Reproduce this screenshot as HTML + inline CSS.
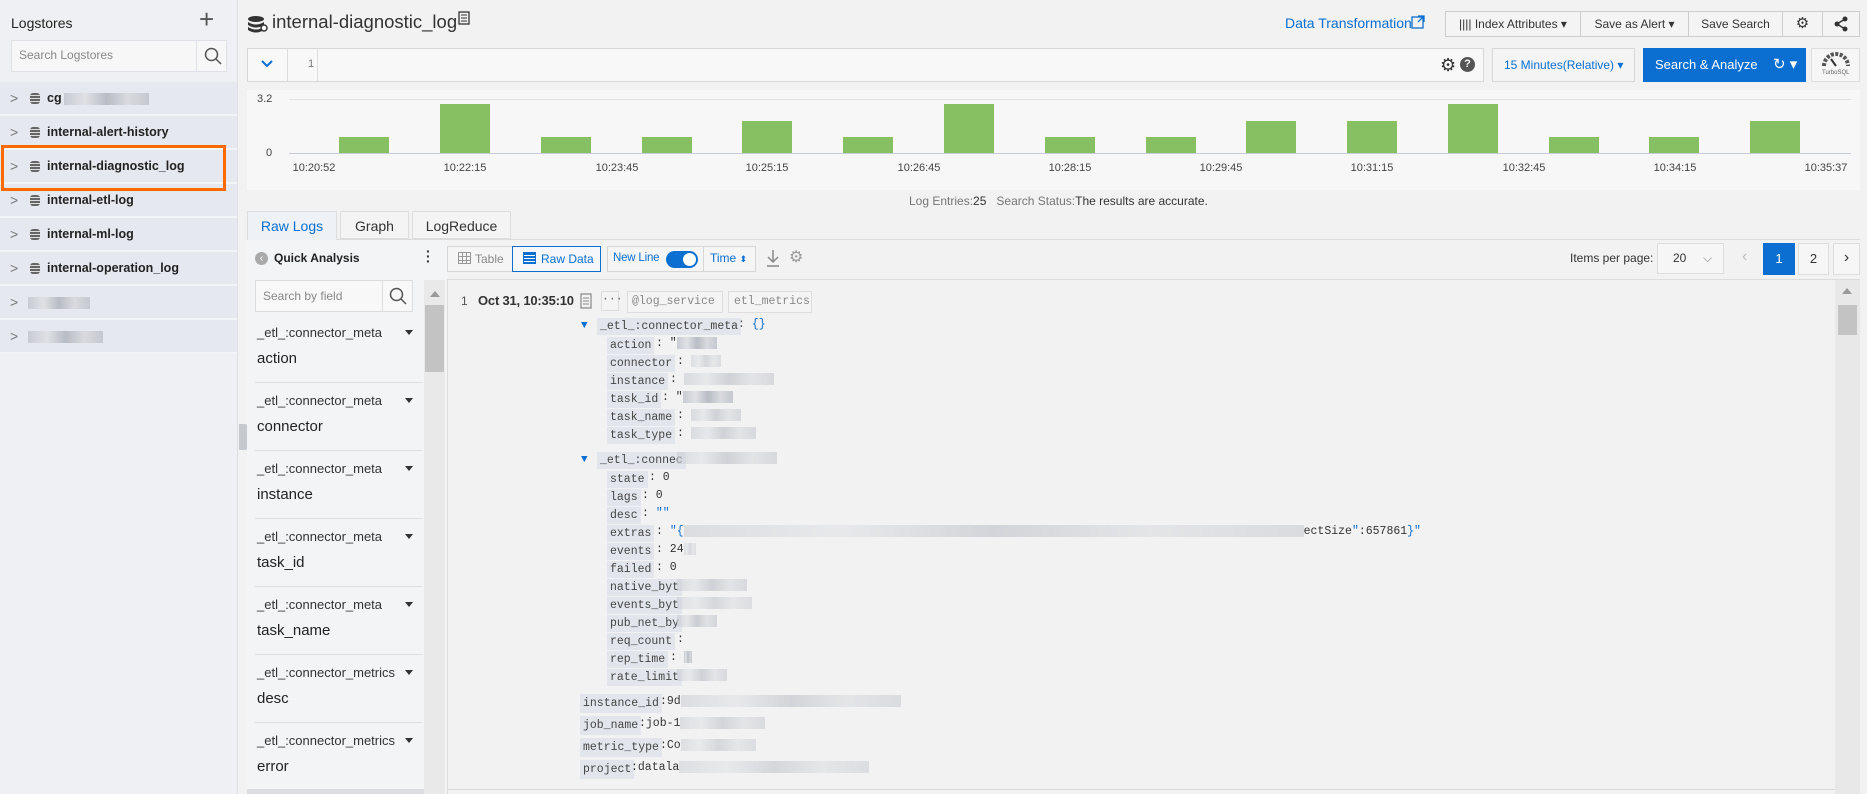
<!DOCTYPE html>
<html><head><meta charset="utf-8"><style>
*{box-sizing:border-box;margin:0;padding:0}
body{width:1867px;height:794px;overflow:hidden;background:#f2f2f2;font-family:"Liberation Sans",sans-serif;color:#333;position:relative}
.a{position:absolute}
.side{left:0;top:0;width:238px;height:794px;background:#eef0f3;border-right:1px solid #dcdfe4}
.row{position:absolute;left:0;width:237px;height:34px;background:#e5e8ee;border-bottom:2px solid #f3f4f7;font-size:12.5px;font-weight:bold;color:#222;line-height:32px}
.row .chev{position:absolute;left:10px;top:0;color:#777;font-weight:normal;font-size:14px}
.row .db{position:absolute;left:30px;top:11px;width:10px;height:11px;border-radius:3px;background:repeating-linear-gradient(#666 0 2px,#ddd 2px 3px)}
.row .t{position:absolute;left:47px}
.blur{display:inline-block;height:12px;background:linear-gradient(90deg,#c8cbd2,#dfe1e5,#b8bcc4,#d8dade,#c5c8cf);vertical-align:middle}
.btn{position:absolute;top:11px;height:26px;border:1px solid #ccc;background:#f4f4f4;font-size:12px;line-height:24px;text-align:center;color:#333}
.mono{font-family:"Liberation Mono","DejaVu Sans Mono",monospace;font-size:11.5px}
.k{position:absolute;background:#e2e6ec;padding:0 3px;height:17px;line-height:17px;color:#444}
.fl{position:absolute;left:257px;font-size:13px;color:#333}
.fv{position:absolute;left:257px;font-size:15px;color:#222}
.tri{position:absolute;left:405px;width:0;height:0;border-left:4px solid transparent;border-right:4px solid transparent;border-top:5px solid #333}
.lbl{position:absolute;top:162px;font-size:11px;color:#444;transform:translateX(-50%)}
.bar{position:absolute;width:50px;background:#86c063}
</style></head><body>

<div class="a side">
  <div class="a" style="left:11px;top:15px;font-size:14px;color:#222">Logstores</div>
  <div class="a" style="left:199px;top:4px;font-size:26px;color:#555;font-weight:300">+</div>
  <div class="a" style="left:11px;top:40px;width:216px;height:32px;background:#f7f7f8;border:1px solid #dde0e4"></div>
  <div class="a" style="left:19px;top:48px;font-size:12px;color:#888">Search Logstores</div>
  <div class="a" style="left:196px;top:41px;width:1px;height:30px;background:#dde0e4"></div>
  <svg class="a" style="left:204px;top:47px" width="18" height="18"><circle cx="7.5" cy="7.5" r="6" fill="none" stroke="#555" stroke-width="1.5"/><line x1="12" y1="12" x2="17" y2="17" stroke="#555" stroke-width="1.5"/></svg>
  <div class="row" style="top:82px"><span class="chev">&gt;</span><span class="db"></span><span class="t">cg<span class="blur" style="width:85px;margin-left:2px"></span></span></div>
  <div class="row" style="top:116px"><span class="chev">&gt;</span><span class="db"></span><span class="t">internal-alert-history</span></div>
  <div class="row" style="top:150px"><span class="chev">&gt;</span><span class="db"></span><span class="t">internal-diagnostic_log</span></div>
  <div class="row" style="top:184px"><span class="chev">&gt;</span><span class="db"></span><span class="t">internal-etl-log</span></div>
  <div class="row" style="top:218px"><span class="chev">&gt;</span><span class="db"></span><span class="t">internal-ml-log</span></div>
  <div class="row" style="top:252px"><span class="chev">&gt;</span><span class="db"></span><span class="t">internal-operation_log</span></div>
  <div class="row" style="top:286px"><span class="chev">&gt;</span><span class="t" style="left:28px"><span class="blur" style="width:62px"></span></span></div>
  <div class="row" style="top:320px"><span class="chev">&gt;</span><span class="t" style="left:28px"><span class="blur" style="width:75px"></span></span></div>
  <div class="a" style="left:1px;top:145px;width:225px;height:46px;border:3px solid #ff6a00"></div>
</div>
<div class="a" style="left:239px;top:424px;width:9px;height:26px;background:#c6c9ce;border-radius:0 3px 3px 0"></div>

<svg class="a" style="left:247px;top:15px" width="22" height="18"><ellipse cx="9" cy="4" rx="8" ry="3" fill="#333"/><path d="M1 7q8 5 16 0v3q-8 5-16 0z" fill="#333"/><path d="M1 12q8 5 16 0v3q-8 5-16 0z" fill="#333"/><circle cx="17" cy="13" r="3" fill="#fff" stroke="#333" stroke-width="1.5"/></svg>
<div class="a" style="left:272px;top:11px;font-size:18.5px;color:#333">internal-diagnostic_log</div>
<svg class="a" style="left:458px;top:11px" width="12" height="14"><rect x="1" y="1" width="10" height="12" fill="none" stroke="#333" stroke-width="1.3"/><line x1="3" y1="4" x2="9" y2="4" stroke="#333"/><line x1="3" y1="7" x2="9" y2="7" stroke="#333"/><line x1="3" y1="10" x2="9" y2="10" stroke="#333"/></svg>

<div class="a" style="left:1285px;top:15px;font-size:14px;color:#0a6fd1">Data Transformation</div>
<svg class="a" style="left:1411px;top:15px" width="14" height="14"><rect x="1" y="2" width="11" height="11" fill="none" stroke="#0a6fd1" stroke-width="1.3"/><path d="M7 1h6v6M13 1L7 7" stroke="#0a6fd1" fill="none" stroke-width="1.3"/></svg>
<div class="btn" style="left:1445px;width:136px">|||| Index Attributes ▾</div>
<div class="btn" style="left:1580px;width:109px">Save as Alert ▾</div>
<div class="btn" style="left:1688px;width:95px">Save Search</div>
<div class="btn" style="left:1782px;width:41px;font-size:15px">⚙</div>
<div class="btn" style="left:1822px;width:38px"></div>
<svg class="a" style="left:1833px;top:16px" width="16" height="16"><circle cx="12" cy="3" r="2.5" fill="#333"/><circle cx="4" cy="8" r="2.5" fill="#333"/><circle cx="12" cy="13" r="2.5" fill="#333"/><path d="M12 3L4 8L12 13" stroke="#333" stroke-width="1.5" fill="none"/></svg>

<div class="a" style="left:247px;top:48px;width:1237px;height:34px;background:#f8f8f8;border:1px solid #d7d7d7"></div>
<div class="a" style="left:287px;top:49px;width:1px;height:32px;background:#ddd"></div>
<div class="a" style="left:317px;top:49px;width:1px;height:32px;background:#ddd"></div>
<svg class="a" style="left:260px;top:59px" width="14" height="10"><path d="M2 2l5 5l5-5" stroke="#0a6fd1" stroke-width="2" fill="none"/></svg>
<div class="a" style="left:308px;top:58px;font-size:11px;color:#777">1</div>
<div class="a" style="left:1440px;top:55px;font-size:18px;color:#333">⚙</div>
<div class="a" style="left:1460px;top:57px;width:15px;height:15px;border-radius:50%;background:#555;color:#fff;font-size:11px;font-weight:bold;text-align:center;line-height:15px">?</div>
<div class="a" style="left:1492px;top:48px;width:143px;height:34px;background:#f4f4f4;border:1px solid #d7d7d7;font-size:12px;color:#0a6fd1;line-height:32px;padding-left:11px">15 Minutes(Relative) ▾</div>
<div class="a" style="left:1643px;top:48px;width:163px;height:34px;background:#0a6fd1;color:#fff;font-size:13px;line-height:34px;padding-left:12px">Search &amp; Analyze<span style="position:absolute;left:130px;font-size:15px">↻ ▾</span></div>
<div class="a" style="left:1811px;top:48px;width:49px;height:34px;background:#f6f6f6;border:1px solid #ddd"></div>
<svg class="a" style="left:1821px;top:52px" width="30" height="16"><path d="M3 14A12 12 0 0 1 27 14" stroke="#555" stroke-width="4" fill="none" stroke-dasharray="3 1.5"/><line x1="15" y1="14" x2="10" y2="7" stroke="#333" stroke-width="2"/></svg>
<div class="a" style="left:1822px;top:70px;font-size:6px;color:#666">TurboSQL</div>

<div class="a" style="left:247px;top:90px;width:1613px;height:100px;background:#f7f7f7"></div>
<div class="a" style="left:257px;top:93px;font-size:11px;color:#444">3.2</div>
<div class="a" style="left:266px;top:147px;font-size:11px;color:#444">0</div>
<div class="a" style="left:289px;top:99px;width:1562px;height:1px;background:#e2e2e2"></div>
<div class="a" style="left:289px;top:153px;width:1562px;height:1px;background:#c8ccd6"></div>
<div class="bar" style="left:339px;top:137px;height:16px"></div>
<div class="bar" style="left:440px;top:104px;height:49px"></div>
<div class="bar" style="left:541px;top:137px;height:16px"></div>
<div class="bar" style="left:642px;top:137px;height:16px"></div>
<div class="bar" style="left:742px;top:121px;height:32px"></div>
<div class="bar" style="left:843px;top:137px;height:16px"></div>
<div class="bar" style="left:944px;top:104px;height:49px"></div>
<div class="bar" style="left:1045px;top:137px;height:16px"></div>
<div class="bar" style="left:1146px;top:137px;height:16px"></div>
<div class="bar" style="left:1246px;top:121px;height:32px"></div>
<div class="bar" style="left:1347px;top:121px;height:32px"></div>
<div class="bar" style="left:1448px;top:104px;height:49px"></div>
<div class="bar" style="left:1549px;top:137px;height:16px"></div>
<div class="bar" style="left:1649px;top:137px;height:16px"></div>
<div class="bar" style="left:1750px;top:121px;height:32px"></div>
<div class="lbl" style="left:314px">10:20:52</div>
<div class="lbl" style="left:465px">10:22:15</div>
<div class="lbl" style="left:617px">10:23:45</div>
<div class="lbl" style="left:767px">10:25:15</div>
<div class="lbl" style="left:919px">10:26:45</div>
<div class="lbl" style="left:1070px">10:28:15</div>
<div class="lbl" style="left:1221px">10:29:45</div>
<div class="lbl" style="left:1372px">10:31:15</div>
<div class="lbl" style="left:1524px">10:32:45</div>
<div class="lbl" style="left:1675px">10:34:15</div>
<div class="lbl" style="left:1826px">10:35:37</div>
<div class="a" style="left:909px;top:194px;font-size:12px;color:#777">Log Entries:<span style="color:#333">25</span>&nbsp;&nbsp;&nbsp;Search Status:<span style="color:#333">The results are accurate.</span></div>

<div class="a" style="left:247px;top:239px;width:1613px;height:1px;background:#dcdcdc"></div>
<div class="a" style="left:247px;top:211px;width:90px;height:29px;background:#eef1f6;border:1px solid #ddd;border-bottom:none;font-size:14px;color:#0a6fd1;text-align:center;line-height:28px">Raw Logs</div>
<div class="a" style="left:340px;top:211px;width:69px;height:28px;background:#f4f4f4;border:1px solid #ddd;font-size:14px;text-align:center;line-height:28px">Graph</div>
<div class="a" style="left:412px;top:211px;width:99px;height:28px;background:#f4f4f4;border:1px solid #ddd;font-size:14px;text-align:center;line-height:28px">LogReduce</div>

<div class="a" style="left:247px;top:240px;width:200px;height:554px;background:#f3f4f6"></div>
<div class="a" style="left:255px;top:252px;width:13px;height:13px;border-radius:50%;background:#aaa;color:#fff;font-size:10px;line-height:13px;text-align:center">‹</div>
<div class="a" style="left:274px;top:251px;font-size:12px;font-weight:bold;color:#222">Quick Analysis</div>
<div class="a" style="left:426px;top:249px;font-size:14px;font-weight:bold;color:#333;line-height:5px">·<br>·<br>·</div>
<div class="a" style="left:255px;top:280px;width:158px;height:32px;background:#f8f8f8;border:1px solid #dcdcdc"></div>
<div class="a" style="left:263px;top:289px;font-size:12px;color:#888">Search by field</div>
<div class="a" style="left:382px;top:281px;width:1px;height:30px;background:#dcdcdc"></div>
<svg class="a" style="left:389px;top:287px" width="18" height="18"><circle cx="7.5" cy="7.5" r="6" fill="none" stroke="#555" stroke-width="1.5"/><line x1="12" y1="12" x2="17" y2="17" stroke="#555" stroke-width="1.5"/></svg>
<div class="a" style="left:424px;top:280px;width:21px;height:514px;background:#e9e9e9"></div>
<div class="a" style="left:430px;top:291px;border-left:5px solid transparent;border-right:5px solid transparent;border-bottom:6px solid #999"></div>
<div class="a" style="left:425px;top:305px;width:19px;height:67px;background:#c3c3c3"></div>

<div class="fl" style="top:325px">_etl_:connector_meta</div><div class="tri" style="top:330px"></div><div class="fv" style="top:350px">action</div>
<div class="a" style="left:255px;top:382px;width:168px;height:1px;background:#e0e0e0"></div>
<div class="fl" style="top:393px">_etl_:connector_meta</div><div class="tri" style="top:398px"></div><div class="fv" style="top:418px">connector</div>
<div class="a" style="left:255px;top:450px;width:168px;height:1px;background:#e0e0e0"></div>
<div class="fl" style="top:461px">_etl_:connector_meta</div><div class="tri" style="top:466px"></div><div class="fv" style="top:486px">instance</div>
<div class="a" style="left:255px;top:518px;width:168px;height:1px;background:#e0e0e0"></div>
<div class="fl" style="top:529px">_etl_:connector_meta</div><div class="tri" style="top:534px"></div><div class="fv" style="top:554px">task_id</div>
<div class="a" style="left:255px;top:586px;width:168px;height:1px;background:#e0e0e0"></div>
<div class="fl" style="top:597px">_etl_:connector_meta</div><div class="tri" style="top:602px"></div><div class="fv" style="top:622px">task_name</div>
<div class="a" style="left:255px;top:654px;width:168px;height:1px;background:#e0e0e0"></div>
<div class="fl" style="top:665px">_etl_:connector_metrics</div><div class="tri" style="top:670px"></div><div class="fv" style="top:690px">desc</div>
<div class="a" style="left:255px;top:722px;width:168px;height:1px;background:#e0e0e0"></div>
<div class="fl" style="top:733px">_etl_:connector_metrics</div><div class="tri" style="top:738px"></div><div class="fv" style="top:758px">error</div>
<div class="a" style="left:247px;top:789px;width:177px;height:5px;background:#dcdde0"></div>

<div class="a" style="left:447px;top:246px;width:154px;height:26px;border:1px solid #d6d6d6;background:#f5f5f5"></div>
<div class="a" style="left:458px;top:252px;width:13px;height:12px;border:1px solid #999;background:repeating-linear-gradient(90deg,transparent 0 3px,#999 3px 4px),repeating-linear-gradient(transparent 0 3px,#999 3px 4px)"></div>
<div class="a" style="left:475px;top:252px;font-size:12px;color:#888">Table</div>
<div class="a" style="left:512px;top:246px;width:89px;height:26px;border:1px solid #0a6fd1;background:#f5f7fa"></div>
<div class="a" style="left:523px;top:252px;width:13px;height:12px;background:repeating-linear-gradient(#0a6fd1 0 2px,#fff 2px 3px);border:1px solid #0a6fd1"></div>
<div class="a" style="left:541px;top:252px;font-size:12px;color:#0a6fd1">Raw Data</div>
<div class="a" style="left:607px;top:246px;width:149px;height:26px;border:1px solid #d6d6d6;background:#f5f5f5"></div>
<div class="a" style="left:613px;top:252px;font-size:11.5px;color:#0a6fd1;letter-spacing:-0.2px">New Line</div>
<div class="a" style="left:666px;top:251px;width:32px;height:17px;border-radius:9px;background:#0a6fd1"></div>
<div class="a" style="left:683px;top:253px;width:13px;height:13px;border-radius:50%;background:#fff"></div>
<div class="a" style="left:703px;top:247px;width:1px;height:24px;background:#d6d6d6"></div>
<div class="a" style="left:710px;top:251px;font-size:12px;color:#0a6fd1">Time <span style="font-size:9px">⬍</span></div>
<svg class="a" style="left:765px;top:249px" width="16" height="18"><path d="M8 1v12M3 8l5 5l5-5M2 17h12" stroke="#888" stroke-width="1.5" fill="none"/></svg>
<div class="a" style="left:789px;top:247px;font-size:16px;color:#999">⚙</div>

<div class="a" style="left:1570px;top:251px;font-size:12px;color:#333">Items per page:</div>
<div class="a" style="left:1657px;top:243px;width:67px;height:31px;border:1px solid #ddd;background:#f6f6f6;font-size:12px;line-height:29px;padding-left:15px">20<span style="position:absolute;left:45px;color:#888">⌵</span></div>
<div class="a" style="left:1742px;top:248px;font-size:16px;color:#bbb">‹</div>
<div class="a" style="left:1763px;top:243px;width:32px;height:32px;background:#0a6fd1;color:#fff;font-size:13px;text-align:center;line-height:32px">1</div>
<div class="a" style="left:1798px;top:243px;width:31px;height:32px;border:1px solid #ddd;background:#f6f6f6;font-size:13px;text-align:center;line-height:30px">2</div>
<div class="a" style="left:1833px;top:243px;width:27px;height:32px;border:1px solid #ddd;background:#f6f6f6;font-size:16px;text-align:center;line-height:28px">›</div>

<div class="a" style="left:447px;top:279px;width:1413px;height:1px;background:#dcdcdc"></div>
<div class="a" style="left:447px;top:279px;width:1px;height:515px;background:#dcdcdc"></div>
<div class="a" style="left:447px;top:789px;width:1388px;height:1px;background:#d8d8d8"></div>
<div class="a" style="left:1835px;top:280px;width:25px;height:514px;background:#e8e8e8"></div>
<div class="a" style="left:1842px;top:288px;border-left:5px solid transparent;border-right:5px solid transparent;border-bottom:6px solid #999"></div>
<div class="a" style="left:1838px;top:305px;width:19px;height:30px;background:#c3c3c3"></div>

<div class="a" style="left:461px;top:294px;font-size:12px;color:#555">1</div>
<div class="a" style="left:478px;top:293px;font-size:13px;font-weight:bold;color:#333;letter-spacing:-0.2px">Oct 31, 10:35:10</div>
<svg class="a" style="left:580px;top:293px" width="12" height="16"><rect x="1" y="1" width="10" height="14" fill="none" stroke="#888" stroke-width="1.2"/><line x1="3" y1="5" x2="9" y2="5" stroke="#888"/><line x1="3" y1="8" x2="9" y2="8" stroke="#888"/><line x1="3" y1="11" x2="9" y2="11" stroke="#888"/></svg>
<div class="a mono" style="left:601px;top:291px;width:18px;height:20px;border:1px solid #ddd;background:#f4f4f4;text-align:center;line-height:16px;color:#666">···</div>
<div class="a mono" style="left:627px;top:291px;width:96px;height:22px;border:1px solid #ddd;background:#f4f4f4;line-height:20px;padding-left:4px;color:#888">@log_service</div>
<div class="a mono" style="left:728px;top:291px;width:84px;height:22px;border:1px solid #ddd;background:#f4f4f4;line-height:20px;padding-left:5px;color:#888">etl_metrics</div>

<div class="a mono" style="left:0;top:0;width:1867px;height:794px">
<div class="a" style="left:581px;top:320px;color:#0a6fd1;font-size:11px">▼</div>
<div class="k" style="left:597px;top:318px">_etl_:connector_meta</div><div class="a" style="left:738px;top:318px;color:#555">: <span style="color:#0a6fd1">{}</span></div>
<div class="k" style="left:607px;top:337px">action</div><div class="a" style="left:656px;top:337px">: "<span class="blur" style="width:40px"></span></div>
<div class="k" style="left:607px;top:355px">connector</div><div class="a" style="left:677px;top:355px">: <span class="blur" style="width:30px;opacity:.5"></span></div>
<div class="k" style="left:607px;top:373px">instance</div><div class="a" style="left:670px;top:373px">: <span class="blur" style="width:90px;opacity:.6"></span></div>
<div class="k" style="left:607px;top:391px">task_id</div><div class="a" style="left:662px;top:391px">: "<span class="blur" style="width:50px"></span></div>
<div class="k" style="left:607px;top:409px">task_name</div><div class="a" style="left:677px;top:409px">: <span class="blur" style="width:50px;opacity:.6"></span></div>
<div class="k" style="left:607px;top:427px">task_type</div><div class="a" style="left:677px;top:427px">: <span class="blur" style="width:65px;opacity:.6"></span></div>
<div class="a" style="left:581px;top:454px;color:#0a6fd1;font-size:11px">▼</div>
<div class="k" style="left:597px;top:452px">_etl_:connec</div><div class="a" style="left:677px;top:452px"><span class="blur" style="width:100px;opacity:.6"></span></div>
<div class="k" style="left:607px;top:471px">state</div><div class="a" style="left:649px;top:471px">: 0</div>
<div class="k" style="left:607px;top:489px">lags</div><div class="a" style="left:642px;top:489px">: 0</div>
<div class="k" style="left:607px;top:507px">desc</div><div class="a" style="left:642px;top:507px">: <span style="color:#0a6fd1">""</span></div>
<div class="k" style="left:607px;top:525px">extras</div><div class="a" style="left:656px;top:525px">: <span style="color:#0a6fd1">"{</span><span class="blur" style="width:620px;opacity:.55"></span>ectSize<span style="color:#0a6fd1">"</span>:657861<span style="color:#0a6fd1">}"</span></div>
<div class="k" style="left:607px;top:543px">events</div><div class="a" style="left:656px;top:543px">: 24<span class="blur" style="width:12px;opacity:.5"></span></div>
<div class="k" style="left:607px;top:561px">failed</div><div class="a" style="left:656px;top:561px">: 0</div>
<div class="k" style="left:607px;top:579px">native_byt</div><div class="a" style="left:677px;top:579px"><span class="blur" style="width:70px;opacity:.6"></span></div>
<div class="k" style="left:607px;top:597px">events_byt</div><div class="a" style="left:677px;top:597px"><span class="blur" style="width:75px;opacity:.5"></span></div>
<div class="k" style="left:607px;top:615px">pub_net_by</div><div class="a" style="left:677px;top:615px"><span class="blur" style="width:40px;opacity:.7"></span></div>
<div class="k" style="left:607px;top:633px">req_count</div><div class="a" style="left:677px;top:633px">: </div>
<div class="k" style="left:607px;top:651px">rep_time</div><div class="a" style="left:670px;top:651px">: <span class="blur" style="width:8px"></span></div>
<div class="k" style="left:607px;top:669px">rate_limit</div><div class="a" style="left:677px;top:669px"><span class="blur" style="width:50px;opacity:.6"></span></div>
<div class="k" style="left:580px;top:694px;height:19px;line-height:19px">instance_id</div><div class="a" style="left:660px;top:695px">:9d<span class="blur" style="width:220px;opacity:.55"></span></div>
<div class="k" style="left:580px;top:716px;height:19px;line-height:19px">job_name</div><div class="a" style="left:639px;top:717px">:job-1<span class="blur" style="width:85px;opacity:.55"></span></div>
<div class="k" style="left:580px;top:738px;height:19px;line-height:19px">metric_type</div><div class="a" style="left:660px;top:739px">:Co<span class="blur" style="width:75px;opacity:.5"></span></div>
<div class="k" style="left:580px;top:760px;height:19px;line-height:19px">project</div><div class="a" style="left:631px;top:761px">:datala<span class="blur" style="width:190px;opacity:.5"></span></div>
</div>
</body></html>
